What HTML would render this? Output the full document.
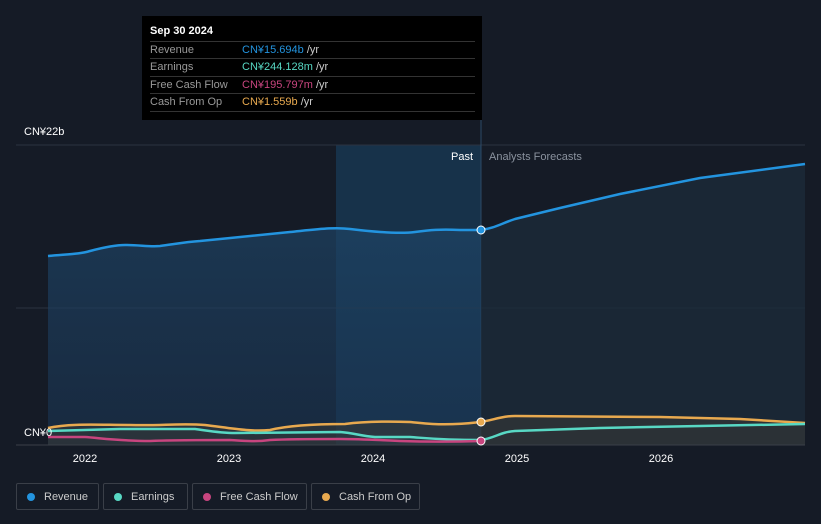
<!DOCTYPE html>
<html><head><meta charset="utf-8"><style>
body{margin:0;width:821px;height:524px;background:#151b26;font-family:"Liberation Sans",sans-serif;overflow:hidden;position:relative}
.tt{position:absolute;left:142px;top:16px;width:340px;height:104px;background:#000;color:#fff;font-size:11px}
.tt .h{position:absolute;left:8px;top:9px;font-weight:bold}
.row{position:absolute;left:8px;width:325px;border-top:1px solid #333;height:17px;line-height:17px;color:#999}
.row span{position:absolute;left:92px}
.lg{position:absolute;top:483px;height:27px;border:1px solid #3a3f48;border-radius:2px;color:#ccc;font-size:11px;line-height:27px;box-sizing:border-box;padding-left:27px}
.lg i{position:absolute;left:10px;top:9px;width:8px;height:8px;border-radius:50%}
</style></head><body>
<svg width="821" height="524" style="position:absolute;left:0;top:0">
<defs><linearGradient id="g" x1="0" y1="0" x2="0" y2="1"><stop offset="0" stop-color="#1e4466" stop-opacity=".9"/><stop offset="1" stop-color="#1a3350" stop-opacity=".8"/></linearGradient></defs>
<rect x="336" y="145" width="145" height="300" fill="#17324a"/>
<line x1="16" y1="145" x2="805" y2="145" stroke="#2c3340"/>
<line x1="16" y1="308" x2="805" y2="308" stroke="#2c3340"/>
<line x1="481" y1="118" x2="481" y2="445" stroke="#2c4a66"/>
<path d="M48,256 C70,254 80,254 90,251 C105,247 115,245 125,245 C140,245 150,247 160,246 C175,244 185,242 200,241 C230,238 250,236 290,232 C320,229 335,227 350,229 C375,232 400,234 415,232 C430,230 440,229 460,230 L481,230 L481,445 L48,445 Z" fill="url(#g)" opacity=".75"/>
<path d="M481,230 C495,228 500,224 515,219 L560,208 L620,194 L700,178 L805,164 L805,445 L481,445 Z" fill="#1b2a3a" opacity=".8"/>
<path d="M48,428 C70,423 100,425 130,425 C160,426 180,423 205,425 C230,428 250,432 270,430 C290,425 320,424 345,424 C360,422 380,421 410,422 C430,424 445,426 481,422 C500,418 505,416 515,416 L660,417 L740,419 L805,423 L805,445 L48,445 Z" fill="#3a3a36" opacity=".55"/>
<path d="M48,256 C70,254 80,254 90,251 C105,247 115,245 125,245 C140,245 150,247 160,246 C175,244 185,242 200,241 C230,238 250,236 290,232 C320,229 335,227 350,229 C375,232 400,234 415,232 C430,230 440,229 460,230 L481,230 C495,228 500,224 515,219 L560,208 L620,194 L700,178 L805,164" fill="none" stroke="#2394df" stroke-width="2.5"/>
<path d="M48,428 C70,423 100,425 130,425 C160,426 180,423 205,425 C230,428 250,432 270,430 C290,425 320,424 345,424 C360,422 380,421 410,422 C430,424 445,426 481,422 C500,418 505,416 515,416 L660,417 L740,419 L805,423" fill="none" stroke="#e8a94f" stroke-width="2.5"/>
<path d="M48,431 L120,429 L195,429 C210,431 220,433 235,433 L340,432 C355,433 360,436 375,437 L410,437 C425,438 440,440 481,440 C495,438 500,432 515,431 L600,428 L700,426 L805,424" fill="none" stroke="#58d8c4" stroke-width="2.5"/>
<path d="M48,437 L85,437 C100,438 120,441 150,441 C170,440 190,440 230,440 C245,441 255,442 270,440 C290,439 320,439 340,439 C360,439 380,440 400,441 C430,442 450,442 481,441" fill="none" stroke="#c8457f" stroke-width="2.5"/>
<line x1="16" y1="445" x2="805" y2="445" stroke="#3a3f48"/>
<circle cx="481" cy="230" r="4" fill="#2394df" stroke="#fff" stroke-width="1"/>
<circle cx="481" cy="422" r="4" fill="#e8a94f" stroke="#fff" stroke-width="1"/>
<circle cx="481" cy="441" r="4" fill="#c8457f" stroke="#fff" stroke-width="1"/>
<g font-size="11" fill="#fff" font-family="Liberation Sans,sans-serif">
<text x="24" y="135">CN¥22b</text>
<text x="24" y="436">CN¥0</text>
<text x="473" y="160" text-anchor="end">Past</text>
<text x="489" y="160" fill="#8a929e">Analysts Forecasts</text>
<text x="85" y="462" text-anchor="middle">2022</text>
<text x="229" y="462" text-anchor="middle">2023</text>
<text x="373" y="462" text-anchor="middle">2024</text>
<text x="517" y="462" text-anchor="middle">2025</text>
<text x="661" y="462" text-anchor="middle">2026</text>
</g>
</svg>
<div class="tt"><div class="h">Sep 30 2024</div>
<div class="row" style="top:25px">Revenue<span style="color:#2394df">CN¥15.694b <b style="font-weight:normal;color:#ccc">/yr</b></span></div>
<div class="row" style="top:42px">Earnings<span style="color:#58d8c4">CN¥244.128m <b style="font-weight:normal;color:#ccc">/yr</b></span></div>
<div class="row" style="top:60px">Free Cash Flow<span style="color:#c8457f">CN¥195.797m <b style="font-weight:normal;color:#ccc">/yr</b></span></div>
<div class="row" style="top:77px">Cash From Op<span style="color:#e8a94f">CN¥1.559b <b style="font-weight:normal;color:#ccc">/yr</b></span></div>
<div class="row" style="top:95px;height:0"></div>
</div>
<div class="lg" style="left:16px;width:83px"><i style="background:#2394df"></i>Revenue</div>
<div class="lg" style="left:103px;width:85px"><i style="background:#58d8c4"></i>Earnings</div>
<div class="lg" style="left:192px;width:115px"><i style="background:#c8457f"></i>Free Cash Flow</div>
<div class="lg" style="left:311px;width:109px"><i style="background:#e8a94f"></i>Cash From Op</div>
</body></html>
